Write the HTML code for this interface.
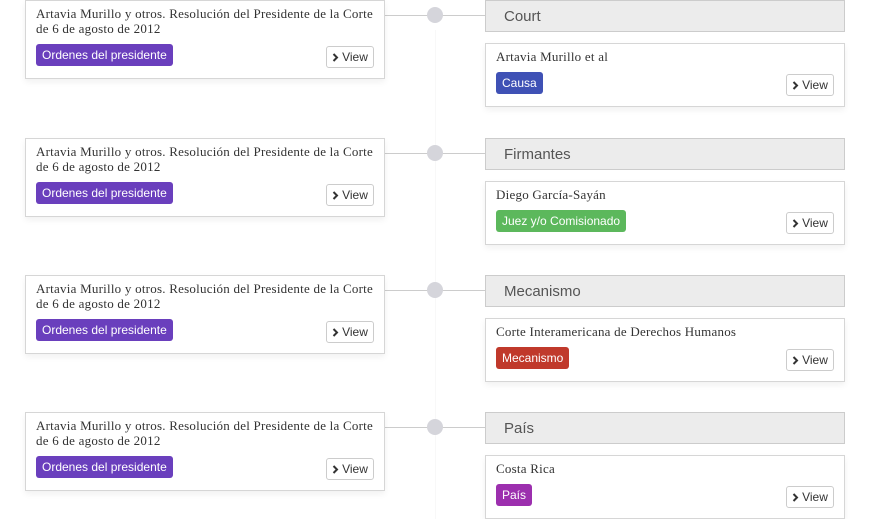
<!DOCTYPE html>
<html><head><meta charset="utf-8"><style>
body{margin:0;width:870px;height:519px;background:#fff;position:relative;overflow:hidden;font-family:"Liberation Sans",sans-serif}
.a{position:absolute;box-sizing:border-box}
.card{background:#fff;border:1px solid #d6d6d6;box-shadow:0 3px 6px rgba(0,0,0,.06)}
.t{font-family:"Liberation Serif",serif;font-size:13px;line-height:15px;color:#333;letter-spacing:0.23px}
.b{font-size:12px;color:#fff;height:22px;line-height:22px;padding:0 6px;border-radius:3px}
.v{width:48px;height:22px;border:1px solid #ccc;border-radius:3px;font-size:12px;line-height:20px;color:#333;text-align:center;background:#fff}
.h{background:#ececec;border:1px solid #ccc;font-size:15px;color:#555;line-height:32px;padding-left:18px}
.ln{height:1px;background:#ccc}
.c{width:16px;height:16px;border-radius:50%;background:#d5d5db}
</style></head><body>
<div class="a" style="left:435px;top:30px;width:1px;height:489px;background:#f8f8f8"></div>
<script>
var rows=[[0,"Court","Artavia Murillo et al","Causa","#3f51b5"],[138,"Firmantes","Diego García-Sayán","Juez y/o Comisionado","#5cb85c"],[275,"Mecanismo","Corte Interamericana de Derechos Humanos","Mecanismo","#c0392b"],[412,"País","Costa Rica","País","#9c2fae"]];
var chev='<svg width="7" height="9" viewBox="0 0 7 9" style="vertical-align:-1px;margin-right:3px"><path d="M1.5 1l3.5 3.5-3.5 3.5" fill="none" stroke="#333" stroke-width="2"/></svg>';
var s="";
rows.forEach(function(r){var o=r[0];
s+='<div class="a ln" style="left:385px;top:'+(o+15)+'px;width:100px"></div>';
s+='<div class="a c" style="left:427px;top:'+(o+7)+'px"></div>';
s+='<div class="a card" style="left:25px;top:'+o+'px;width:360px;height:79px"></div>';
s+='<div class="a t" style="left:36px;top:'+(o+6)+'px;width:342px">Artavia Murillo y otros. Resolución del Presidente de la Corte de 6 de agosto de 2012</div>';
s+='<div class="a b" style="left:36px;top:'+(o+44)+'px;background:#6a3fbd">Ordenes del presidente</div>';
s+='<div class="a v" style="left:326px;top:'+(o+46)+'px">'+chev+'View</div>';
s+='<div class="a h" style="left:485px;top:'+o+'px;width:360px;height:32px">'+r[1]+'</div>';
s+='<div class="a card" style="left:485px;top:'+(o+43)+'px;width:360px;height:64px"></div>';
s+='<div class="a t" style="left:496px;top:'+(o+49)+'px">'+r[2]+'</div>';
s+='<div class="a b" style="left:496px;top:'+(o+72)+'px;background:'+r[4]+'">'+r[3]+'</div>';
s+='<div class="a v" style="left:786px;top:'+(o+74)+'px">'+chev+'View</div>';
});
document.write(s);
</script>
</body></html>
